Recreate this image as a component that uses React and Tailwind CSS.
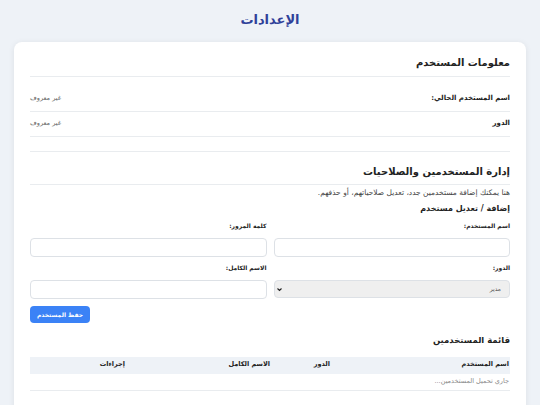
import React from 'react'

function InfoRow({ label, value }) {
  return (
    <div className="flex items-center justify-between h-[25px] border-b border-[#e9ecef]">
      <span className="text-[7px] font-bold text-[#222]">{label}</span>
      <span className="text-[6.5px] text-[#666]">{value}</span>
    </div>
  )
}

function Field({ label, children }) {
  return (
    <div className="flex flex-col">
      <label className="text-[6px] font-bold text-[#222] mb-[8px]">{label}</label>
      {children}
    </div>
  )
}

export default function App() {
  return (
    <div dir="rtl" className="min-h-screen bg-[#eef2f7] px-[14px] pt-[10px] font-['DejaVu_Sans','Noto_Sans',sans-serif]">
      <h1 className="text-center text-[13px] font-bold text-[#2f4199] mb-[12px]">الإعدادات</h1>

      <div className="bg-white rounded-[8px] shadow-[0_1px_6px_rgba(0,0,0,0.08)] px-[16px] pt-[13px] pb-[30px]">
        <section>
          <h2 className="text-[10px] font-bold text-[#222] pb-[6px] border-b border-[#e9ecef]">معلومات المستخدم</h2>
          <div className="mt-[10px]">
            <InfoRow label="اسم المستخدم الحالي:" value="غير معروف" />
            <InfoRow label="الدور" value="غير معروف" />
          </div>
        </section>

        <section className="mt-[14px] pt-[12px] border-t border-[#e9ecef]">
          <h2 className="text-[10px] font-bold text-[#222] pb-[5px] border-b border-[#e9ecef]">إدارة المستخدمين والصلاحيات</h2>
          <p className="text-[7.5px] text-[#444] mt-[2px]">هنا يمكنك إضافة مستخدمين جدد، تعديل صلاحياتهم، أو حذفهم.</p>

          <h3 className="text-[8px] font-bold text-[#222] mt-[5px] mb-[6px]">إضافة / تعديل مستخدم</h3>
          <div className="grid grid-cols-2 gap-x-[7px] gap-y-[6px]">
            <Field label="اسم المستخدم:">
              <input className="block h-[19px] rounded-[4px] border border-[#dde1e6] bg-white" />
            </Field>
            <Field label="كلمة المرور:">
              <input type="password" className="block h-[19px] rounded-[4px] border border-[#dde1e6] bg-white" />
            </Field>
            <Field label="الدور:">
              <div className="relative">
                <select className="block appearance-none w-full h-[18px] rounded-[4px] border border-[#dde1e6] bg-[#efefef] text-[6px] text-[#555] px-[8px]">
                  <option>مدير</option>
                </select>
                <svg viewBox="0 0 10 10" className="absolute left-[3px] top-[7px] w-[5px] h-[5px] pointer-events-none">
                  <path d="M1 3 L5 7 L9 3" fill="none" stroke="#222" strokeWidth="2.2" />
                </svg>
              </div>
            </Field>
            <Field label="الاسم الكامل:">
              <input className="block h-[19px] rounded-[4px] border border-[#dde1e6] bg-white" />
            </Field>
          </div>
          <div className="flex justify-end mt-[7px]">
            <button className="bg-[#3b82f6] text-white text-[6px] font-bold rounded-[4px] w-[60px] h-[17px]">حفظ المستخدم</button>
          </div>

          <h3 className="text-[8.5px] font-bold text-[#222] mt-[11px]">قائمة المستخدمين</h3>
          <table className="w-full mt-[10px] text-right border-collapse">
            <thead>
              <tr className="bg-[#eef2f7]">
                <th className="w-[178px] h-[17px] px-[1px] text-[6.5px] font-bold text-[#222]">اسم المستخدم</th>
                <th className="w-[60px] px-[2px] text-[6.5px] font-bold text-[#222]">الدور</th>
                <th className="w-[145px] px-[2px] text-[6.5px] font-bold text-[#222]">الاسم الكامل</th>
                <th className="px-[2px] text-[6.5px] font-bold text-[#222]">إجراءات</th>
              </tr>
            </thead>
            <tbody>
              <tr className="border-b border-[#e9ecef]">
                <td colSpan={4} className="h-[17px] px-[1px] text-[6.5px] text-[#888]">جاري تحميل المستخدمين...</td>
              </tr>
            </tbody>
          </table>
        </section>
      </div>
    </div>
  )
}
